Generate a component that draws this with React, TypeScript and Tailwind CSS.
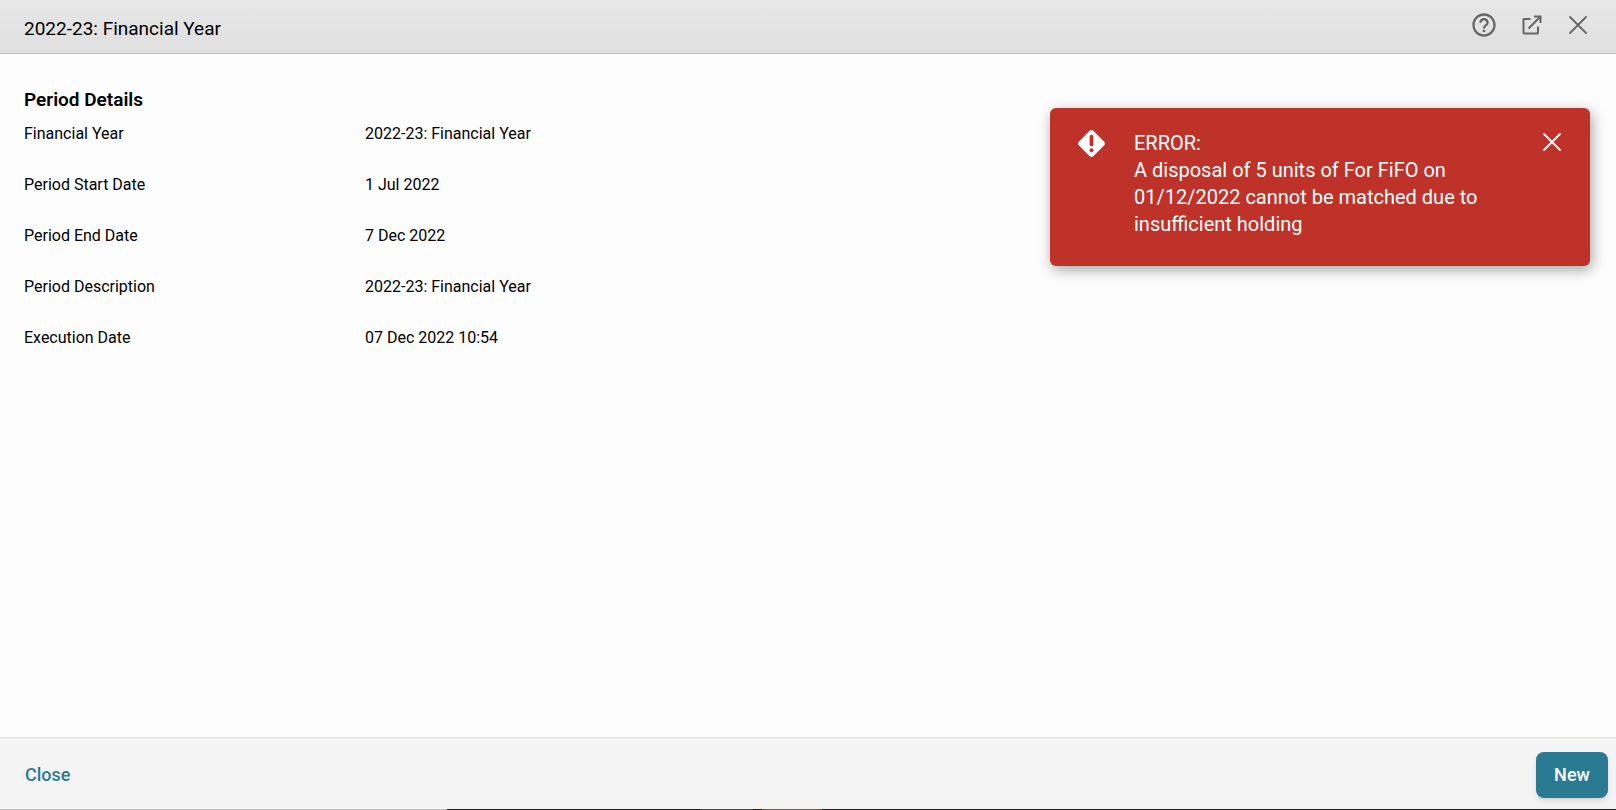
import React, { useState } from 'react';
import { MdHelpOutline } from 'react-icons/md';

const details = [
  { label: 'Financial Year', value: '2022-23: Financial Year' },
  { label: 'Period Start Date', value: '1 Jul 2022' },
  { label: 'Period End Date', value: '7 Dec 2022' },
  { label: 'Period Description', value: '2022-23: Financial Year' },
  { label: 'Execution Date', value: '07 Dec 2022 10:54' },
];

function CrossIcon() {
  return (
    <svg viewBox="0 0 20 20" className="w-5 h-5" fill="none" stroke="currentColor" strokeWidth="1.8" strokeLinecap="round">
      <path d="M2 2L18 18M18 2L2 18" />
    </svg>
  );
}

function OpenIcon() {
  return (
    <svg viewBox="0 0 20 20" className="w-5 h-5" fill="none" stroke="currentColor" strokeWidth="2">
      <path d="M8.5 4H2.2Q1.5 4 1.5 4.7V17.8Q1.5 18.5 2.2 18.5H15.3Q16 18.5 16 17.8V11.5" />
      <path d="M12 1.5H18.5V8M18.3 1.7L6.5 13.5" />
    </svg>
  );
}

function ErrorIcon() {
  return (
    <svg viewBox="0 0 27 27" className="w-[27px] h-[27px] shrink-0">
      <path
        d="M11.7 .8Q13.5-.8 15.3 .8L26.2 11.7Q27.8 13.5 26.2 15.3L15.3 26.2Q13.5 27.8 11.7 26.2L.8 15.3Q-.8 13.5 .8 11.7Z"
        fill="#fff"
      />
      <path d="M13.5 6.6V14.4" stroke="#be3229" strokeWidth="3.8" strokeLinecap="round" />
      <circle cx="13.5" cy="20.2" r="2" fill="#be3229" />
    </svg>
  );
}

export default function App() {
  const [showError, setShowError] = useState(true);

  return (
    <div className="relative flex flex-col min-h-screen bg-[#fdfdfd] text-black font-[Roboto,sans-serif]">
      <header className="flex items-center justify-between h-[54px] pl-6 pr-7 border-b border-[#bebebe] bg-linear-to-b from-[#e7e7e7] to-[#dfdfdf]">
        <h1 className="pt-1 text-[19px] leading-6">2022-23: Financial Year</h1>
        <div className="flex items-center pb-1 gap-6 text-[#666666]">
          <button type="button" aria-label="Help">
            <MdHelpOutline className="w-7 h-7" />
          </button>
          <button type="button" aria-label="Open in new window">
            <OpenIcon />
          </button>
          <button type="button" aria-label="Close window" className="ml-0.5">
            <CrossIcon />
          </button>
        </div>
      </header>

      <main className="flex-1 px-6 pt-8">
        <h2 className="text-[19px] leading-7 font-semibold">Period Details</h2>
        <dl>
          {details.map((item) => (
            <div key={item.label} className="flex h-[51px] pt-2 text-base leading-6">
              <dt className="w-[341px] shrink-0">{item.label}</dt>
              <dd>{item.value}</dd>
            </div>
          ))}
        </dl>
      </main>

      <footer className="flex items-center justify-between h-[72px] pl-[25px] pr-2 pt-0.5 border-t border-[#e0e0e0] bg-[#f4f4f4]">
        <button type="button" className="text-lg font-medium text-[#2a7a92]">
          Close
        </button>
        <button type="button" className="w-[72px] h-[46px] rounded-lg bg-[#2a7a92] text-lg font-medium text-white shadow-md">
          New
        </button>
      </footer>

      {/* edge of the window behind the dialog */}
      <div className="flex h-px bg-[#191919]">
        <div className="w-[447px] bg-[#bebebe]" />
        <div className="w-[53px] ml-[253px] bg-[#4c4c4c]" />
        <div className="w-[60px] ml-[9px] bg-[#8f5a2c]" />
      </div>

      {showError && (
        <div
          role="alert"
          className="absolute top-[108px] right-[26px] flex w-[540px] pt-[22px] pb-7 px-7 rounded-md bg-[#be3229] text-white shadow-[2px_4px_14px_rgba(0,0,0,0.35)]"
        >
          <ErrorIcon />
          <div className="flex-1 ml-[29px] mr-12 text-xl leading-[27px]">
            <p>ERROR:</p>
            <p>A disposal of 5 units of For FiFO on 01/12/2022 cannot be matched due to insufficient holding</p>
          </div>
          <button type="button" aria-label="Dismiss" className="self-start pt-0.5" onClick={() => setShowError(false)}>
            <CrossIcon />
          </button>
        </div>
      )}
    </div>
  );
}
